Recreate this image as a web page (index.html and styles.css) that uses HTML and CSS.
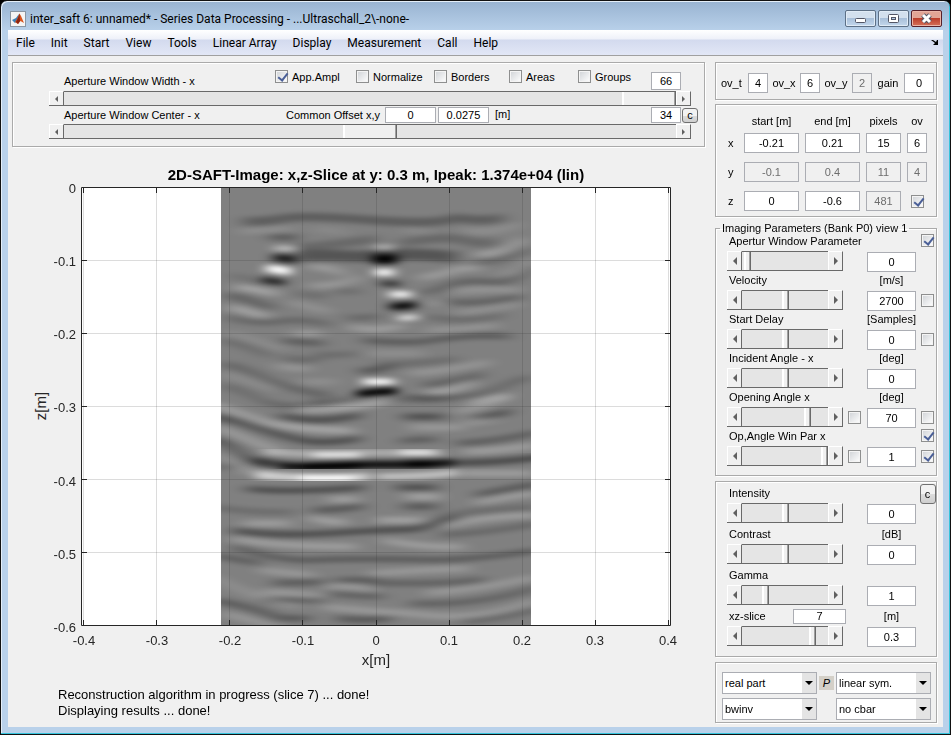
FILE: index.html
```html
<!DOCTYPE HTML>
<html lang="en">
<head>
	<meta charset="utf-8" />
	<title>inter_saft 6: unnamed*</title>
	<link rel="stylesheet" href="styles.css">
</head>
<body>
<div class="window">
	<header class="titlebar">
		<svg class="logo" width="16" height="16" viewBox="0 0 16 16">
			<rect x="0.5" y="0.5" width="15" height="15" fill="#f4f4f4" stroke="#8a96a3"/>
			<path d="M2 9 L6 7 L9 3 L8 9 L5 12Z" fill="#3c7fb5"/>
			<path d="M5 11 L7 8 L9.500 2.500 L11 5 L14 12 L10.500 10 L8 13Z" fill="#d9541e"/>
			<path d="M8 7 L9.500 2.500 L10 10 L8 13 L6 11Z" fill="#8c2410"/>
		</svg>
		<h1>inter_saft 6: unnamed* - Series Data Processing - ...Ultraschall_2\-none-</h1>
		<button class="winbtn" aria-label="Minimize"><svg width="29" height="15" viewBox="0 0 29 15"><rect x="9.500" y="7.500" width="10" height="4" rx="1" fill="#fff" stroke="#535666"/></svg></button>
		<button class="winbtn" aria-label="Maximize"><svg width="29" height="15" viewBox="0 0 29 15"><rect x="9.500" y="3.500" width="10" height="8" rx="1" fill="#fff" stroke="#535666"/><rect x="12.500" y="6.500" width="4" height="2" fill="#b4cbe4" stroke="#535666"/></svg></button>
		<button class="winbtn close" aria-label="Close"><svg width="29" height="15" viewBox="0 0 29 15"><path d="M11 4 L18 11 M18 4 L11 11" stroke="#535666" stroke-width="5"/><path d="M11 4 L18 11 M18 4 L11 11" stroke="#fff" stroke-width="3"/></svg></button>
	</header>
	<nav class="menu">
		<a href="#">File</a>
		<a href="#">Init</a>
		<a href="#">Start</a>
		<a href="#">View</a>
		<a href="#">Tools</a>
		<a href="#">Linear Array</a>
		<a href="#">Display</a>
		<a href="#">Measurement</a>
		<a href="#">Call</a>
		<a href="#">Help</a>
		<svg class="dock" width="8" height="7" viewBox="0 0 8 7"><path d="M0 1 H2 L5 3 L6 1 L7 1 V6 H2 L4 4Z" fill="#000"/></svg>
	</nav>
	<main>
		<div class="left">
			<section class="panel aperture">
				<div class="row">
					<label class="name" for="width">Aperture Window Width - x</label>
					<div class="checks">
						<label><input type="checkbox" checked>App.Ampl</label>
						<label><input type="checkbox">Normalize</label>
						<label><input type="checkbox">Borders</label>
						<label><input type="checkbox">Areas</label>
						<label><input type="checkbox">Groups</label>
					</div>
					<input class="num" id="width" type="text" value="66">
				</div>
				<div class="slider long">
					<button class="prev" aria-label="Less"></button>
					<input type="range" aria-label="Aperture Window Width" value="100">
					<button class="next" aria-label="More"></button>
				</div>
				<div class="row offset">
					<label class="name" for="center">Aperture Window Center - x</label>
					<label for="offx">Common Offset x,y</label>
					<div class="pair">
						<input id="offx" type="text" value="0">
						<input type="text" aria-label="Common Offset y" value="0.0275">
						<span>[m]</span>
					</div>
					<input class="num" id="center" type="text" value="34">
					<button class="c">c</button>
				</div>
				<div class="slider long">
					<button class="prev" aria-label="Less"></button>
					<input type="range" aria-label="Aperture Window Center" value="50">
					<button class="next" aria-label="More"></button>
				</div>
			</section>

			<svg class="plot" viewBox="12 160 693 515">
				<defs>
					<clipPath id="scan"><rect x="221" y="188" width="310" height="438"/></clipPath>
					<filter id="soft" x="-10%" y="-10%" width="120%" height="120%"><feGaussianBlur stdDeviation="27 7"/></filter>
					<filter id="spot" x="-10%" y="-10%" width="120%" height="120%"><feGaussianBlur stdDeviation="19 6"/></filter>
				</defs>
				<rect x="82" y="188" width="589" height="438" fill="#fff"/>
				<g clip-path="url(#scan)">
					<rect x="221" y="188" width="310" height="438" fill="#808080"/>
					<!-- upper half, 3 units to a pixel -->
					<g transform="translate(210 180) scale(.333333)">
						<g class="dark weak" filter="url(#soft)">
							<path d="M100 124 Q170 126 220 115 T480 120 T740 112 Q820 130 880 110" stroke-width="26" opacity=".7"/>
							<path d="M180 172 H260" opacity=".8"/>
							<path d="M250 205 Q420 190 500 175 M570 190 Q720 165 760 180 T860 185" stroke-width="26" opacity=".5"/>
							<path d="M260 228 Q360 222 450 230 Q600 215 740 232" stroke-width="34" opacity=".9"/>
							<path d="M800 245 Q880 250 960 205" opacity=".5"/>
							<path d="M60 285 Q120 295 190 312" opacity=".3"/>
							<path d="M50 345 Q110 355 190 385" opacity=".7"/>
							<path d="M260 335 Q310 355 350 345 M380 335 H450" opacity=".4"/>
							<path d="M640 340 Q700 325 730 310 Q800 295 870 310 M860 310 Q930 300 960 260" opacity=".6"/>
							<path d="M710 365 Q800 375 930 350" opacity=".6"/>
							<path d="M50 410 Q140 440 240 420 Q310 420 360 435 M410 410 Q460 420 510 405" opacity=".5"/>
							<path d="M650 410 Q760 430 880 405" opacity=".4"/>
							<path d="M220 480 Q290 490 340 490 M460 480 Q560 490 640 485 Q780 460 900 470" opacity=".7"/>
							<path d="M40 480 Q120 500 180 530 M220 530 Q290 550 340 530" opacity=".45"/>
							<path d="M320 520 Q380 530 440 520 M500 555 Q650 550 740 535" opacity=".4"/>
							<path d="M450 572 Q500 575 550 555" opacity=".9"/>
							<path d="M40 550 Q110 565 190 605 Q280 640 360 645 M640 615 Q760 600 820 580" opacity=".6"/>
							<path d="M590 650 Q760 665 850 630 Q920 600 960 590" opacity=".55"/>
							<path d="M40 615 Q120 640 160 665 Q260 690 360 670" opacity=".5"/>
						</g>
						<g class="light weak" filter="url(#soft)">
							<path d="M90 155 Q180 150 240 145 M760 150 Q850 165 930 130" opacity=".3"/>
							<path d="M310 150 Q360 145 410 160 M580 145 L660 160" opacity=".2"/>
							<path d="M800 225 Q880 225 940 175" opacity=".7"/>
							<path d="M300 260 Q370 260 400 285 M630 295 Q710 280 750 265 H810" opacity=".6"/>
							<path d="M300 315 Q370 325 450 290 M880 285 Q930 275 960 235" opacity=".5"/>
							<path d="M80 320 Q160 330 200 345 M60 380 Q130 400 170 410" opacity=".8"/>
							<path d="M240 365 Q310 385 360 395 M730 335 Q820 325 930 330" opacity=".4"/>
							<path d="M650 370 H710 M740 400 Q830 390 930 370" opacity=".35"/>
							<path d="M250 460 H330 M420 440 Q500 460 580 435" opacity=".6"/>
							<path d="M650 450 Q760 450 860 435" opacity=".4"/>
							<path d="M50 455 Q130 480 220 510 M470 520 H640" opacity=".3"/>
							<path d="M200 555 Q260 570 300 565 M600 580 Q700 575 840 545" opacity=".45"/>
							<path d="M40 580 Q120 605 200 630 M270 605 H380" opacity=".3"/>
							<path d="M650 638 Q740 635 790 605 M780 670 Q840 655 900 645" opacity=".7"/>
						</g>
						<g class="light" filter="url(#spot)">
							<path d="M195 205 L257 206" opacity=".5"/>
							<path d="M170 264 L242 275" stroke-width="23"/>
							<path d="M495 202 H550" opacity=".4"/>
							<path d="M495 277 H550" stroke-width="21" opacity=".95"/>
							<path d="M540 343 H602" stroke-width="19" opacity=".9"/>
							<path d="M565 415 L622 411" opacity=".75"/>
							<path d="M460 605 H550" stroke-width="18" opacity=".95"/>
						</g>
						<g class="dark" filter="url(#spot)">
							<path d="M190 232 L258 239" stroke-width="22" opacity=".8"/>
							<path d="M155 298 L225 309" stroke-width="18" opacity=".7"/>
							<path d="M488 237 H560" stroke-width="28"/>
							<path d="M512 311 H570" opacity=".6"/>
							<path d="M540 380 Q580 380 617 374" stroke-width="22" opacity=".9"/>
							<path d="M440 642 Q500 634 560 633" stroke-width="21" opacity=".95"/>
						</g>
					</g>
					<!-- lower half -->
					<g transform="translate(210 400) scale(.333333)">
						<g class="dark weak" filter="url(#soft)">
							<path d="M0 48 Q60 55 130 80 T270 120 Q340 135 450 115"/>
							<path d="M210 45 Q310 75 450 45 M580 50 H700 M800 55 Q870 45 900 30"/>
							<path d="M300 0 Q370 10 440 -8 M550 -5 Q650 5 700 -5" opacity=".4"/>
							<path d="M570 125 Q620 115 680 120 M740 130 Q860 125 990 95" opacity=".7"/>
							<path d="M0 115 Q60 130 90 160 Q130 190 200 197"/>
							<path d="M110 265 Q210 280 460 262 M560 262 H680"/>
							<path d="M800 285 Q870 270 990 250 M310 330 Q400 330 460 318 M580 320 H680" opacity=".8"/>
							<path d="M0 320 Q130 340 250 335 M690 350 Q780 330 980 320" opacity=".4"/>
							<path d="M70 390 Q180 410 360 400 Q500 390 620 388 Q690 365 740 350"/>
							<path d="M690 405 Q820 400 990 370" opacity=".5"/>
							<path d="M70 440 Q210 485 310 480 T620 478 Q750 485 990 450" opacity=".7"/>
							<path d="M10 465 Q90 480 150 490 M190 548 Q270 550 340 545 M380 540 H500" opacity=".7"/>
							<path d="M480 548 Q730 555 820 535" opacity=".6"/>
							<path d="M360 580 Q430 590 520 590 M160 600 H340 M600 610 Q800 620 990 560" opacity=".6"/>
							<path d="M10 600 Q130 620 210 655 H300 M380 655 Q470 665 540 655" opacity=".8"/>
							<path d="M20 200 H80 M760 665 Q880 655 990 625" opacity=".5"/>
						</g>
						<g class="light weak" filter="url(#soft)">
							<path d="M0 10 Q90 40 160 65 Q260 90 430 92 M260 28 Q400 30 530 5" opacity=".75"/>
							<path d="M600 82 H760 M740 35 Q830 20 890 -10 M770 70 L860 55" opacity=".5"/>
							<path d="M20 80 Q150 135 210 155" opacity=".7"/>
							<path d="M40 160 Q80 210 170 230 M760 155 Q860 155 980 135 M740 220 H970" opacity=".6"/>
							<path d="M360 298 H440 M590 290 H690 M300 352 Q360 370 410 365 M500 360 H640" opacity=".7"/>
							<path d="M100 370 H240 M700 380 Q800 350 980 345 M70 415 Q180 440 440 440" opacity=".6"/>
							<path d="M520 420 Q650 445 760 440 M800 310 Q880 290 980 280" opacity=".6"/>
							<path d="M150 510 Q260 520 310 525 M480 520 Q650 510 780 505" opacity=".5"/>
							<path d="M350 560 Q430 555 490 570 M650 580 Q800 570 980 530 M160 575 Q260 580 340 590" opacity=".5"/>
							<path d="M40 640 Q140 665 230 690 M340 620 Q500 635 600 640 Q800 670 980 600" opacity=".5"/>
							<path d="M10 530 Q120 590 260 620" opacity=".4"/>
						</g>
						<g class="light" filter="url(#spot)">
							<path d="M160 155 Q340 168 460 158 H700" stroke-width="20" opacity=".35"/>
							<path d="M310 164 H450 M570 157 H670" stroke-width="18" opacity=".65"/>
							<path d="M140 224 Q300 242 480 230" stroke-width="25" opacity=".6"/>
							<path d="M270 235 H430" stroke-width="22" opacity=".85"/>
							<path d="M500 230 Q640 230 740 218" stroke-width="20" opacity=".5"/>
						</g>
						<g class="dark" filter="url(#spot)">
							<path d="M130 180 Q260 205 390 197 T720 188 Q860 190 1050 165" stroke-width="20" opacity=".4"/>
							<path d="M210 199 Q330 204 480 194 Q620 198 730 187" stroke-width="23" opacity=".75"/>
							<path d="M280 200 Q360 198 450 195 M590 192 H670" stroke-width="23" opacity=".9"/>
						</g>
					</g>
				</g>
				<path class="grid" d="M83.500 188 V626 M156.500 188 V626 M229.500 188 V626 M302.500 188 V626 M376.500 188 V626 M449.500 188 V626 M522.500 188 V626 M595.500 188 V626 M668.500 188 V626 M82 260.500 H671 M82 333.500 H671 M82 406.500 H671 M82 479.500 H671 M82 552.500 H671"/>
				<path class="axis" d="M81.500 187.500 H670.500 V625.500 H81.500Z"/>
				<path class="axis" d="M83.500 188 v5 M156.500 188 v5 M229.500 188 v5 M302.500 188 v5 M376.500 188 v5 M449.500 188 v5 M522.500 188 v5 M595.500 188 v5 M668.500 188 v5 M83.500 625 v-5 M156.500 625 v-5 M229.500 625 v-5 M302.500 625 v-5 M376.500 625 v-5 M449.500 625 v-5 M522.500 625 v-5 M595.500 625 v-5 M668.500 625 v-5"/>
				<path class="axis" d="M82 260.500 h5 M82 333.500 h5 M82 406.500 h5 M82 479.500 h5 M82 552.500 h5 M670 260.500 h-5 M670 333.500 h-5 M670 406.500 h-5 M670 479.500 h-5 M670 552.500 h-5"/>
				<text class="title" x="376" y="180">2D-SAFT-Image: x,z-Slice at y: 0.3 m, Ipeak: 1.374e+04 (lin)</text>
				<g class="ticks y">
					<text x="76" y="193">0</text>
					<text x="76" y="266">-0.1</text>
					<text x="76" y="339">-0.2</text>
					<text x="76" y="412">-0.3</text>
					<text x="76" y="486">-0.4</text>
					<text x="76" y="559">-0.5</text>
					<text x="76" y="632">-0.6</text>
				</g>
				<g class="ticks x">
					<text x="84" y="645">-0.4</text>
					<text x="157" y="645">-0.3</text>
					<text x="230" y="645">-0.2</text>
					<text x="303" y="645">-0.1</text>
					<text x="376" y="645">0</text>
					<text x="449" y="645">0.1</text>
					<text x="522" y="645">0.2</text>
					<text x="595" y="645">0.3</text>
					<text x="668" y="645">0.4</text>
				</g>
				<text class="unit" x="376" y="665">x[m]</text>
				<text class="unit" x="0" y="0" transform="translate(46 406) rotate(-90)">z[m]</text>
			</svg>

			<p class="status">Reconstruction algorithm in progress (slice 7) ... done!<br>Displaying results ... done!</p>
		</div>

		<div class="right">
			<section class="panel overs">
				<label for="ovt">ov_t</label><input id="ovt" type="text" value="4">
				<label for="ovx">ov_x</label><input id="ovx" type="text" value="6">
				<label for="ovy">ov_y</label><input id="ovy" type="text" value="2" disabled>
				<label for="gain">gain</label><input id="gain" type="text" value="0">
			</section>

			<section class="panel extent">
				<span></span><span>start [m]</span><span>end [m]</span><span>pixels</span><span>ov</span>
				<b>x</b>
				<input type="text" aria-label="x start" value="-0.21">
				<input type="text" aria-label="x end" value="0.21">
				<input type="text" aria-label="x pixels" value="15">
				<input type="text" aria-label="x ov" value="6">
				<b>y</b>
				<input type="text" aria-label="y start" value="-0.1" disabled>
				<input type="text" aria-label="y end" value="0.4" disabled>
				<input type="text" aria-label="y pixels" value="11" disabled>
				<input type="text" aria-label="y ov" value="4" disabled>
				<b>z</b>
				<input type="text" aria-label="z start" value="0">
				<input type="text" aria-label="z end" value="-0.6">
				<input type="text" aria-label="z pixels" value="481" disabled>
				<input type="checkbox" aria-label="z ov" checked>
			</section>

			<fieldset class="panel imaging">
				<legend>Imaging Parameters (Bank P0) view 1</legend>
				<div class="param">
					<label for="p1">Apertur Window Parameter</label>
					<input class="top" type="checkbox" aria-label="Apertur Window on" checked>
					<div class="slider"><button class="prev" aria-label="Less"></button><input type="range" aria-label="Apertur Window" value="3"><button class="next" aria-label="More"></button></div>
					<input class="value" id="p1" type="text" value="0">
				</div>
				<div class="param">
					<label for="p2">Velocity</label>
					<span class="of">[m/s]</span>
					<div class="slider"><button class="prev" aria-label="Less"></button><input type="range" aria-label="Velocity" value="51"><button class="next" aria-label="More"></button></div>
					<input class="value" id="p2" type="text" value="2700">
					<input class="last" type="checkbox" aria-label="Velocity on">
				</div>
				<div class="param">
					<label for="p3">Start Delay</label>
					<span class="of">[Samples]</span>
					<div class="slider"><button class="prev" aria-label="Less"></button><input type="range" aria-label="Start Delay" value="51"><button class="next" aria-label="More"></button></div>
					<input class="value" id="p3" type="text" value="0">
					<input class="last" type="checkbox" aria-label="Start Delay on">
				</div>
				<div class="param">
					<label for="p4">Incident Angle - x</label>
					<span class="of">[deg]</span>
					<div class="slider"><button class="prev" aria-label="Less"></button><input type="range" aria-label="Incident Angle" value="51"><button class="next" aria-label="More"></button></div>
					<input class="value" id="p4" type="text" value="0">
				</div>
				<div class="param">
					<label for="p5">Opening Angle x</label>
					<span class="of">[deg]</span>
					<div class="slider"><button class="prev" aria-label="Less"></button><input type="range" aria-label="Opening Angle" value="78"><button class="next" aria-label="More"></button></div>
					<input class="mid" type="checkbox" aria-label="Opening Angle lock">
					<input class="value" id="p5" type="text" value="70">
					<input class="last" type="checkbox" aria-label="Opening Angle on">
				</div>
				<div class="param">
					<label for="p6">Op,Angle Win Par x</label>
					<input class="top" type="checkbox" aria-label="Op,Angle Win on" checked>
					<div class="slider"><button class="prev" aria-label="Less"></button><input type="range" aria-label="Op,Angle Win Par" value="100"><button class="next" aria-label="More"></button></div>
					<input class="mid" type="checkbox" aria-label="Op,Angle Win lock">
					<input class="value" id="p6" type="text" value="1">
					<input class="last" type="checkbox" aria-label="Op,Angle Win Par on" checked>
				</div>
			</fieldset>

			<section class="panel display">
				<div class="param">
					<label for="d1">Intensity</label>
					<button class="c top">c</button>
					<div class="slider"><button class="prev" aria-label="Less"></button><input type="range" aria-label="Intensity" value="51"><button class="next" aria-label="More"></button></div>
					<input class="value" id="d1" type="text" value="0">
				</div>
				<div class="param">
					<label for="d2">Contrast</label>
					<span class="of">[dB]</span>
					<div class="slider"><button class="prev" aria-label="Less"></button><input type="range" aria-label="Contrast" value="51"><button class="next" aria-label="More"></button></div>
					<input class="value" id="d2" type="text" value="0">
				</div>
				<div class="param">
					<label for="d3">Gamma</label>
					<div class="slider"><button class="prev" aria-label="Less"></button><input type="range" aria-label="Gamma" value="25"><button class="next" aria-label="More"></button></div>
					<input class="value" id="d3" type="text" value="1">
				</div>
				<div class="param">
					<div class="slice"><label for="slice">xz-slice</label><input id="slice" type="text" value="7"></div>
					<span class="of">[m]</span>
					<div class="slider"><button class="prev" aria-label="Less"></button><input type="range" aria-label="Slice" value="85"><button class="next" aria-label="More"></button></div>
					<input class="value" type="text" aria-label="Slice position" value="0.3">
				</div>
			</section>

			<section class="panel modes">
				<div class="drop"><select aria-label="Part"><option>real part</option></select></div>
				<button class="p">P</button>
				<div class="drop"><select aria-label="Scale"><option>linear sym.</option></select></div>
				<div class="drop"><select aria-label="Colormap"><option>bwinv</option></select></div>
				<span></span>
				<div class="drop"><select aria-label="Colorbar"><option>no cbar</option></select></div>
			</section>
		</div>
	</main>
</div>
</body>
</html>
```
FILE: styles.css
```css
* {
	box-sizing: border-box;
}
body {
	background: #000;
	color: #000;
	font: 11px/14px "Liberation Sans", Arial, sans-serif;
	margin: 0;
}
button,
input,
select {
	border-radius: 0;
	color: inherit;
	font: inherit;
	margin: 0;
	padding: 0;
}
svg {
	display: block;
}

.window {
	background: linear-gradient(#98b3d1, #b9d1ea 30px);
	border: 1px solid #111;
	border-radius: 7px 7px 0 0;
	box-shadow: inset -1px -1px #35c4dc, inset 1px 1px #e4eef8;
	display: flex;
	flex-direction: column;
	min-height: 100vh;
	padding: 0 7px 7px;
}

.titlebar {
	align-items: center;
	display: flex;
	gap: 2px;
	height: 29px;
	padding: 6px 1px 0 2px;
}
.titlebar h1 {
	flex: 1;
	font: 12px/16px Roboto, sans-serif;
	margin: 0 0 0 2px;
}
.winbtn {
	background: linear-gradient(#d3e0ee 45%, #a9c0da 50%, #c3d7ec);
	border: 1px solid #5d7086;
	border-radius: 2px;
	box-shadow: inset 0 0 0 1px #e0ebf6;
	height: 17px;
	width: 31px;
}
.close {
	background: linear-gradient(#e2a596 45%, #bc3f2c 50%, #d5705a);
	border-color: #57202a;
	box-shadow: inset 0 0 0 1px #eab5a8;
}

.menu {
	align-items: center;
	background: linear-gradient(#fff, #eef1f9 9px, #d3daee 10px, #e2e7f6);
	border-bottom: 1px solid #a0a0a0;
	display: flex;
	font: 12px/16px Roboto, sans-serif;
	gap: 16px;
	height: 26px;
	padding: 0 4px 0 8px;
}
.menu a {
	color: #000;
	text-decoration: none;
}
.dock {
	margin-left: auto;
}

main {
	background: #f0f0f0;
	display: grid;
	flex: 1;
	gap: 10px;
	grid-template-columns: minmax(0, 1fr) 222px;
	padding: 6px 6px 3px 4px;
}

.panel {
	border: 1px solid #aaa;
	box-shadow: 1px 1px #fff, inset 1px 1px #fff;
	margin: 0;
	min-width: 0;
}

input[type="text"] {
	background: #fff;
	border: 1px solid #abadb3;
	height: 20px;
	min-width: 0;
	text-align: center;
	width: 100%;
}
input[type="text"]:disabled {
	background: #f0f0f0;
	color: #6d6d6d;
}
input[type="checkbox"] {
	appearance: none;
	background: linear-gradient(135deg, #cfd2d6, #fff);
	border: 1px solid #8e8f8f;
	box-shadow: inset 0 0 0 1px #f4f4f4;
	height: 13px;
	position: relative;
	width: 13px;
}
input[type="checkbox"]:checked::after {
	border: solid #4a5f97;
	border-width: 0 2px 2px 0;
	content: "";
	height: 8px;
	left: 4px;
	position: absolute;
	top: 0;
	transform: rotate(38deg);
	width: 4px;
}
.c {
	background: linear-gradient(#f2f2f2 50%, #dcdcdc 50%, #cfcfcf);
	border: 1px solid #707070;
	border-radius: 3px;
}

/* sliders: arrow, track, arrow */
.slider {
	background: #e5e5e5;
	border-bottom: 1px solid #696969;
	display: flex;
	height: 20px;
}
.slider button {
	align-items: center;
	background: #f0f0f0;
	border: solid #fff;
	border-width: 1px 0 0 1px;
	border-right: 1px solid #696969;
	display: flex;
	flex: none;
	justify-content: center;
	width: 15px;
}
.slider button::after {
	border: 4px solid transparent;
	content: "";
}
.slider .prev::after {
	border-left-width: 0;
	border-right-color: #606060;
}
.slider .next::after {
	border-left-color: #606060;
	border-right-width: 0;
}
.slider input {
	appearance: none;
	background: none;
	border-top: 1px solid #696969;
	flex: 1;
	height: 100%;
	min-width: 0;
}
.slider input::-webkit-slider-runnable-track {
	height: 100%;
}
.slider input::-webkit-slider-thumb {
	appearance: none;
	background: #f0f0f0;
	border-left: 1px solid #fff;
	border-right: 1px solid #696969;
	box-shadow: inset -1px 0 #a0a0a0, inset 1px 0 #fff;
	height: 100%;
	width: 7px;
}
.slider.long {
	height: 15px;
	margin: 0 0 0 36px;
	width: calc(100% - 49px);
}
.slider.long button::after {
	border-width: 3px;
}
.slider.long .prev::after {
	border-left-width: 0;
}
.slider.long .next::after {
	border-right-width: 0;
}
.slider.long input::-webkit-slider-thumb {
	width: 54px;
}

.aperture {
	height: 85px;
	padding-top: 7px;
}
.row {
	align-items: center;
	display: flex;
	height: 21px;
	padding-left: 51px;
}
.row .name {
	flex: none;
	width: 211px;
}
.row .num {
	height: 18px;
	width: 30px;
}
.checks {
	display: grid;
	flex: 1;
	grid-template-columns: 81fr 78fr 75fr 69fr 73fr;
	margin-bottom: 8px;
}
.checks label {
	align-items: center;
	display: flex;
	gap: 4px;
}
.aperture .row .num {
	margin-right: 23px;
}
.row.offset {
	height: 18px;
}
.row.offset input {
	height: 16px;
}
.row.offset .name {
	width: 222px;
}
.aperture .row.offset .num {
	margin-right: 1px;
}
.pair {
	display: flex;
	flex: 1;
	gap: 2px;
	margin-left: 5px;
}
.pair input {
	width: 51px;
}
.pair span {
	margin-left: 4px;
}
.row .c {
	height: 15px;
	line-height: 12px;
	margin-right: 6px;
	width: 16px;
}

.plot {
	margin-top: 13px;
	width: 100%;
}
.plot .dark path,
.plot .light path {
	fill: none;
}
.plot .dark {
	stroke: #000;
	stroke-width: 16px;
}
.plot .light {
	stroke: #fff;
	stroke-width: 16px;
}
.plot .weak {
	opacity: .38;
	stroke-width: 19px;
}
.grid {
	stroke: #262626;
	stroke-opacity: .16;
}
.axis {
	fill: none;
	stroke: #262626;
}
.plot text {
	fill: #262626;
	text-anchor: middle;
}
.plot .title {
	fill: #000;
	font-size: 15px;
	font-weight: bold;
}
.plot .ticks {
	font-size: 13px;
}
.plot .y text {
	text-anchor: end;
}
.plot .unit {
	font-size: 15px;
}
.status {
	font-size: 13px;
	line-height: 16px;
	margin: 12px 0 0 46px;
}

.right {
	display: flex;
	flex-direction: column;
	gap: 5px;
}
.overs {
	align-items: center;
	display: grid;
	grid-template-columns: 27px 20px 32px 20px 32px 20px 32px 30px;
	height: 38px;
	padding: 4px 0 0 5px;
}
.overs label {
	text-align: center;
}
.overs label:first-child {
	text-align: left;
}
.extent {
	align-content: start;
	align-items: center;
	display: grid;
	gap: 9px 6px;
	grid-template-columns: 10px 55px 55px 35px 20px;
	grid-template-rows: 6px;
	height: 113px;
	justify-items: center;
	margin-top: -1px;
	padding: 13px 0 0 12px;
}
.extent b {
	font-weight: normal;
	justify-self: start;
}

.imaging {
	height: 254px;
	padding: 0 0 0 11px;
}
.imaging legend {
	line-height: 12px;
	margin-left: -7px;
	padding: 0 2px;
}
.imaging .param:nth-child(2) {
	margin-top: -1px;
}
.param {
	display: grid;
	grid-template-columns: 116px 5px 13px 6px 49px 5px 13px;
	grid-template-rows: 18px 21px;
}
.param > label,
.slice {
	grid-column: 1 / 7;
	grid-row: 1;
	line-height: 17px;
	padding-left: 2px;
}
.param .of {
	grid-column: 5;
	grid-row: 1;
	justify-self: center;
	line-height: 17px;
	white-space: nowrap;
}
.param .top {
	align-self: start;
	grid-column: 7;
	grid-row: 1;
	margin-top: 1px;
}
.param .slider {
	grid-column: 1;
	grid-row: 2;
}
.param .value {
	grid-column: 5;
	grid-row: 2;
	margin-top: 1px;
}
.param .mid {
	align-self: center;
	grid-column: 3;
	grid-row: 2;
}
.param .last {
	align-self: center;
	grid-column: 7;
	grid-row: 2;
}

.display {
	height: 176px;
	padding: 1px 0 0 11px;
}
.display .param {
	grid-template-rows: 20px 21px;
}
.display .param > label,
.display .of,
.slice {
	line-height: 20px;
}
.display .c {
	height: 20px;
	justify-self: center;
	width: 16px;
	z-index: 1;
}
.slice {
	align-items: center;
	display: flex;
}
.slice label {
	width: 64px;
}
.param .slice input {
	height: 15px;
	width: 53px;
}

.modes {
	display: grid;
	gap: 1px 0;
	grid-template-columns: 95px 19px 95px;
	height: 61px;
	justify-items: center;
	padding: 9px 0 0 6px;
}
.drop {
	position: relative;
	width: 100%;
}
.drop select {
	appearance: none;
	background: linear-gradient(90deg, transparent 79px, #e4e4e4 79px) #fff;
	border: 1px solid #abadb3;
	display: block;
	height: 22px;
	padding-left: 2px;
	width: 100%;
}
.drop::after {
	border: 4px solid transparent;
	border-bottom-width: 0;
	border-top-color: #000;
	content: "";
	pointer-events: none;
	position: absolute;
	right: 4px;
	top: 9px;
}
.p {
	align-self: start;
	background: #d4d0c8;
	border: 0;
	font-style: italic;
	height: 14px;
	margin-top: 4px;
	width: 15px;
}
```
